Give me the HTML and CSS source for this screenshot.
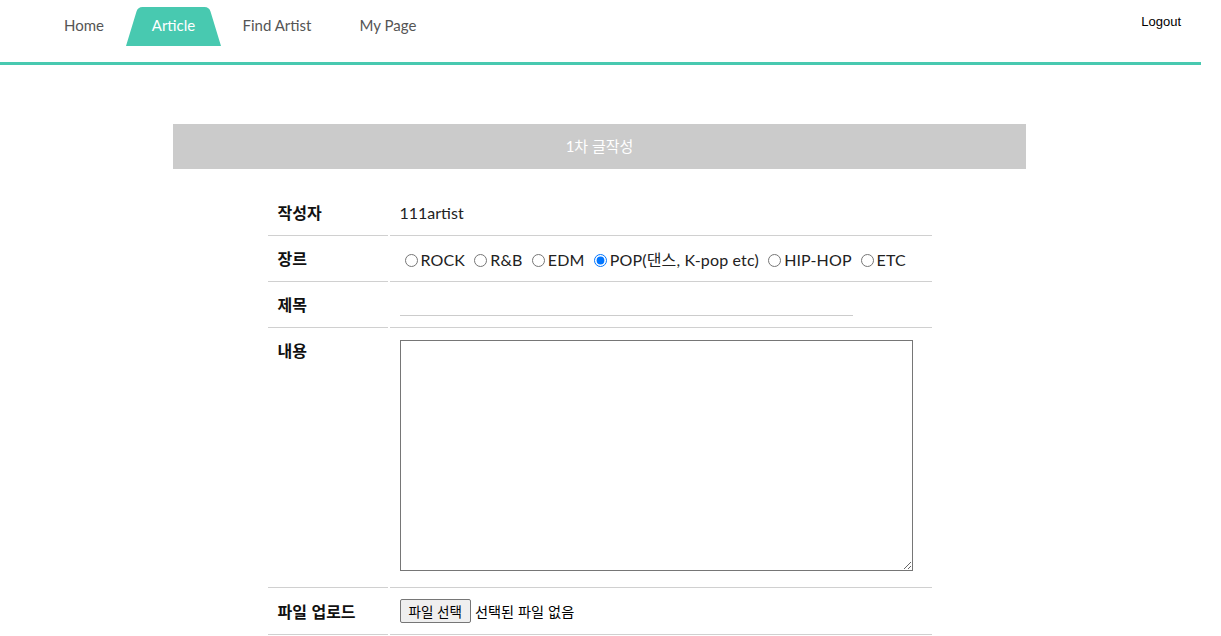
FILE: index.html
```html
<!DOCTYPE html>
<html lang="ko">
<head>
<meta charset="utf-8">
<title>1차 글작성</title>
<link rel="stylesheet" href="styles.css">
</head>
<body>
<div class="page">
  <header class="header">
    <ul class="nav">
      <li class="nav-item item-home"><a href="#">Home</a></li>
      <li class="nav-item item-article active">
        <svg class="tab-bg" width="95" height="39" viewBox="0 0 95 39" aria-hidden="true"><path d="M0 39 L10.5 4.5 Q11.8 0 16.5 0 L78.5 0 Q83.2 0 84.5 4.5 L95 39 Z" fill="#48c9b0"/></svg>
        <a href="#">Article</a>
      </li>
      <li class="nav-item item-find"><a href="#">Find Artist</a></li>
      <li class="nav-item item-my"><a href="#">My Page</a></li>
    </ul>
    <a class="logout" href="#">Logout</a>
  </header>

  <main class="content">
    <div class="title-bar">1차 글작성</div>
    <form class="write-form">
      <table class="form-table">
        <tr>
          <th>작성자</th>
          <td class="writer">111artist</td>
        </tr>
        <tr>
          <th>장르</th>
          <td class="genres">
            <label><input type="radio" name="genre">ROCK</label>
            <label><input type="radio" name="genre">R&amp;B</label>
            <label><input type="radio" name="genre">EDM</label>
            <label><input type="radio" name="genre" checked>POP(댄스, K-pop etc)</label>
            <label><input type="radio" name="genre">HIP-HOP</label>
            <label><input type="radio" name="genre">ETC</label>
          </td>
        </tr>
        <tr>
          <th>제목</th>
          <td><input class="title-input" type="text"></td>
        </tr>
        <tr class="row-content">
          <th>내용</th>
          <td><textarea class="content-input"></textarea></td>
        </tr>
        <tr class="row-file">
          <th>파일 업로드</th>
          <td class="file-cell">
            <label class="file-btn">파일 선택<input type="file" class="file-hidden"></label>
            <span class="file-name">선택된 파일 없음</span>
          </td>
        </tr>
      </table>
    </form>
  </main>
</div>
</body>
</html>
```

FILE: styles.css
```css
* { box-sizing: border-box; }

body {
  margin: 0;
  background: #fff;
  font-family: Lato, "Noto Sans CJK KR", sans-serif;
  color: #222;
}

.page {
  width: 1201px;
}

.header {
  height: 65px;
  border-bottom: 3px solid #48c9b0;
  display: flex;
  justify-content: space-between;
  align-items: flex-start;
}

.nav {
  list-style: none;
  margin: 0;
  padding: 7px 0 0 38px;
  display: flex;
}

.nav-item {
  position: relative;
  height: 39px;
  line-height: 37px;
  text-align: center;
  font-size: 15px;
  margin-left: -4px;
}
.nav-item:first-child { margin-left: 0; }

.item-home { width: 92px; }
.item-article { width: 95px; }
.item-find { width: 120px; }
.item-my { width: 110px; }

.nav-item a {
  position: relative;
  color: #555;
  text-decoration: none;
}

.tab-bg {
  position: absolute;
  left: 0;
  top: 0;
}

.nav-item.active a { color: #fff; }

.logout {
  margin: 14px 20px 0 0;
  font-family: "Liberation Sans", Arial, sans-serif;
  font-size: 13px;
  line-height: 15px;
  color: #000;
  text-decoration: none;
}

.content {
  width: 1199px;
  padding-top: 59px;
}

.title-bar {
  width: 853px;
  height: 45px;
  margin: 0 auto;
  background: #cbcbcb;
  color: #fff;
  font-size: 15px;
  line-height: 45px;
  text-align: center;
  font-family: Lato, "Noto Sans CJK KR", sans-serif;
}

.form-table {
  margin: 21px auto 0;
  border-collapse: separate;
  border-spacing: 2px;
}

.form-table th,
.form-table td {
  height: 44px;
  border-bottom: 1px solid #d0d0d0;
  padding: 0 10px 3px;
  vertical-align: middle;
}

.form-table th {
  width: 120px;
  text-align: left;
  font-family: "Noto Sans CJK KR", sans-serif;
  font-weight: bold;
  font-size: 16px;
  color: #111;
}

.form-table td {
  width: 542px;
  font-size: 16px;
  color: #222;
}

.form-table td.genres {
  white-space: nowrap;
  letter-spacing: 0.15px;
  padding-bottom: 2px;
}

.genres input[type="radio"] {
  margin: 0 3px 0 5px;
  width: 13px;
  height: 13px;
  vertical-align: -1px;
}

.title-input {
  display: block;
  width: 453px;
  height: 21px;
  border: none;
  border-bottom: 1px solid #ccc;
  outline: none;
  padding: 0;
  margin: 3px 0 0 0;
  font-family: Lato, "Noto Sans CJK KR", sans-serif;
  font-size: 15px;
}

.form-table .row-content th,
.form-table .row-content td {
  vertical-align: top;
  padding-top: 10px;
  padding-bottom: 16px;
}

.form-table .row-content th {
  line-height: 20px;
}

.content-input {
  display: block;
  width: 513px;
  height: 231px;
  border: 1px solid #767676;
  resize: both;
  margin: 0;
}

.form-table .row-file th,
.form-table .row-file td {
  height: 45px;
}

.form-table td.file-cell {
  font-family: "Noto Sans CJK KR", sans-serif;
  font-size: 14px;
  padding-bottom: 2px;
}

.file-btn {
  display: inline-block;
  height: 24px;
  padding: 0 8px;
  line-height: 22px;
  background: #efefef;
  border: 1px solid #767676;
  border-radius: 2px;
  color: #000;
  font-size: 13.5px;
  vertical-align: middle;
}

.file-hidden { display: none; }

.file-name {
  color: #000;
  font-size: 14.2px;
  vertical-align: middle;
}
```
